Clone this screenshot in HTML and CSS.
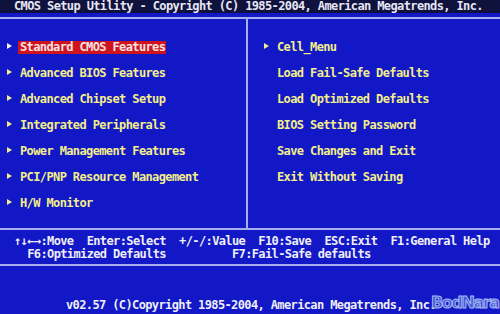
FILE: index.html
```html
<!DOCTYPE html>
<html lang="en">
<head>
  <meta charset="UTF-8">
  <meta name="viewport" content="width=device-width, initial-scale=1.0">
  <title>CMOS Setup Utility</title>
  <link rel="stylesheet" href="styles.css">
</head>
<body>

  <header class="titlebar">CMOS Setup Utility - Copyright (C) 1985-2004, American Megatrends, Inc.</header>

  <main class="frame">
    <ul class="menu menu-left">
      <li><span class="arrow arrow-white"></span><span class="selected">Standard CMOS Features</span></li>
      <li><span class="arrow"></span>Advanced BIOS Features</li>
      <li><span class="arrow"></span>Advanced Chipset Setup</li>
      <li><span class="arrow"></span>Integrated Peripherals</li>
      <li><span class="arrow"></span>Power Management Features</li>
      <li><span class="arrow"></span>PCI/PNP Resource Management</li>
      <li><span class="arrow"></span>H/W Monitor</li>
    </ul>
    <ul class="menu menu-right">
      <li><span class="arrow"></span>Cell_Menu</li>
      <li><span class="arrow blank"></span>Load Fail-Safe Defaults</li>
      <li><span class="arrow blank"></span>Load Optimized Defaults</li>
      <li><span class="arrow blank"></span>BIOS Setting Password</li>
      <li><span class="arrow blank"></span>Save Changes and Exit</li>
      <li><span class="arrow blank"></span>Exit Without Saving</li>
    </ul>
  </main>

  <section class="keys">
    <p>↑↓←→:Move  Enter:Select  +/-/:Value  F10:Save  ESC:Exit  F1:General Help</p>
    <p>  F6:Optimized Defaults          F7:Fail-Safe defaults</p>
  </section>

  <footer class="version">v02.57 (C)Copyright 1985-2004, American Megatrends, Inc.</footer>

  <div class="watermark">BodNara</div>

</body>
</html>
```

FILE: styles.css
```css
body {
  margin: 0;
  width: 500px;
  height: 314px;
  overflow: hidden;
  position: relative;
  background-color: #1218c6;
  font-family: "DejaVu Sans Mono", "Liberation Mono", monospace;
  font-weight: bold;
  font-size: 12px;
  letter-spacing: -0.62px;
  color: #f2ee8a;
}

.titlebar {
  height: 13px;
  line-height: 13px;
  padding-left: 14px;
  background-color: #10123e;
  color: #e6e6f4;
  white-space: pre;
  margin-bottom: 4px;
}

.frame {
  display: flex;
  height: 209px;
  border-top: 2px solid #a6aef0;
  border-bottom: 2px solid #a6aef0;
}

.menu {
  list-style: none;
  margin: 0;
  padding: 15px 0 0 0;
}

.menu li {
  height: 26px;
  line-height: 26px;
  white-space: pre;
}

.menu-left {
  width: 248px;
  padding-left: 7px;
  box-sizing: border-box;
  border-right: 2px solid #a6aef0;
}

.menu-right {
  padding-left: 16px;
}

.arrow {
  display: inline-block;
  width: 13px;
  vertical-align: middle;
  position: relative;
  top: -2px;
}

.arrow::before {
  content: "";
  display: block;
  width: 0;
  height: 0;
  border-left: 5px solid #f2ee8a;
  border-top: 3px solid transparent;
  border-bottom: 3px solid transparent;
}

.arrow-white::before {
  border-left-color: #f4f0f4;
}

.blank::before {
  border-left-color: transparent;
}

.selected {
  display: inline-block;
  line-height: 13px;
  margin-left: -2px;
  padding: 0 1px 0 2px;
  background-color: #d0141e;
  color: #f6e2e2;
}

.keys {
  height: 36px;
  padding-top: 5px;
  box-sizing: border-box;
  padding-left: 14px;
  border-bottom: 2px solid #a6aef0;
  color: #eeeef8;
}

.keys p {
  margin: 0;
  line-height: 13px;
  white-space: pre;
}

.version {
  padding: 33px 0 0 66px;
  line-height: 13px;
  color: #eeeef8;
  white-space: pre;
}

.watermark {
  position: absolute;
  left: 431px;
  top: 293px;
  font-family: "DejaVu Sans", sans-serif;
  font-size: 16px;
  font-weight: bold;
  letter-spacing: -1.4px;
  color: rgba(80, 110, 225, 0.8);
  -webkit-text-stroke: 1px #a8b8f0;
}
```
